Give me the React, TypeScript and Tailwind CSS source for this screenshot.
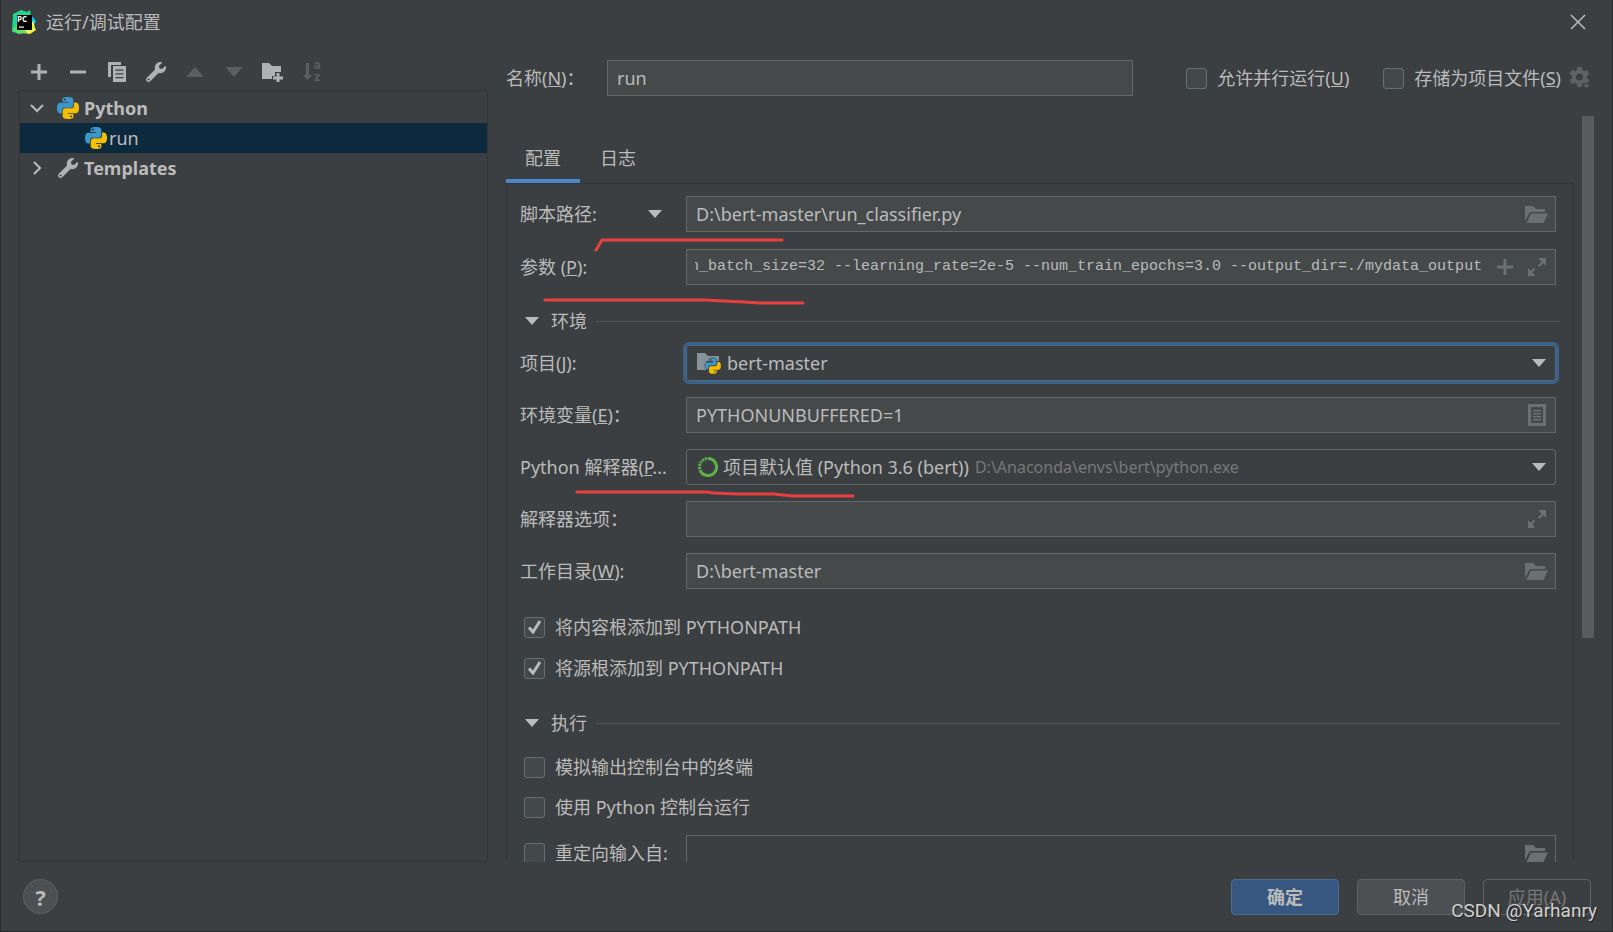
import { useEffect, useRef, type ReactNode } from 'react';
import { FaWrench } from 'react-icons/fa';

const PARAMETERS =
  'n_batch_size=32 --learning_rate=2e-5 --num_train_epochs=3.0 --output_dir=./mydata_output';

const PYTHON_HALF =
  'M14.25.18l.9.2.73.26.59.3.45.32.34.34.25.34.16.33.1.3.04.26.02.2-.01.13V8.5l-.05.63-.13.55-.21.46-.26.38-.3.31-.33.25-.35.19-.35.14-.33.1-.3.07-.26.04-.21.02H8.77l-.69.05-.59.14-.5.22-.41.27-.33.32-.27.35-.2.36-.15.37-.1.35-.07.32-.04.27-.02.21v3.06H3.17l-.21-.03-.28-.07-.32-.12-.35-.18-.36-.26-.36-.36-.35-.46-.32-.59-.28-.73-.21-.88-.14-1.05-.05-1.23.06-1.22.16-1.04.24-.87.32-.71.36-.57.4-.44.42-.33.42-.24.4-.16.36-.1.32-.05.24-.01h.16l.06.01h8.16v-.83H6.18l-.01-2.75-.02-.37.05-.34.11-.31.17-.28.25-.26.31-.23.38-.2.44-.18.51-.15.58-.12.64-.1.71-.06.77-.04.84-.02 1.27.05zm-6.3 1.98l-.23.33-.08.41.08.41.23.34.33.22.41.09.41-.09.33-.22.23-.34.08-.41-.08-.41-.23-.33-.33-.22-.41-.09-.41.09z';

const PythonIcon = ({ className = 'size-[22px]' }: { className?: string }) => (
  <svg viewBox="0 0 24 24" className={`shrink-0 ${className}`}>
    <path d={PYTHON_HALF} fill="#3e97c9" />
    <path d={PYTHON_HALF} fill="#f2bf05" transform="rotate(180 12 12)" />
  </svg>
);

const PyCharmIcon = () => (
  <svg viewBox="0 0 24 24" className="size-6 shrink-0">
    <path d="M1 4L9 0l6 2 3-2 1 6-6 9-8 8-5-1z" fill="#21d789" />
    <path d="M19 6l2 1 3 4-2 4-5-2z" fill="#07c3f2" />
    <path d="M12 19l8-6 1-3 2 8 1 2-6 4-7-1z" fill="#f1f546" />
    <path d="M0 19l5-2 8 3 2 3-9 1z" fill="#5ee06a" />
    <rect x="5" y="5" width="15" height="15" fill="#000" />
    <text x="5" y="12" fontSize="8" fontWeight="700" fontFamily="Open Sans, sans-serif" fill="#fff">
      PC
    </text>
    <path d="M7 16.500h5v1.200H7z" fill="#fff" />
  </svg>
);

const PlusIcon = ({ className = 'size-4' }: { className?: string }) => (
  <svg viewBox="0 0 16 16" className={className} fill="currentColor">
    <path d="M6.500 0h3v6.500H16v3H9.500V16h-3V9.500H0v-3h6.500z" />
  </svg>
);

const MinusIcon = () => (
  <svg viewBox="0 0 16 16" className="size-4" fill="currentColor">
    <path d="M0 6.500h16v3H0z" />
  </svg>
);

const CopyIcon = () => (
  <svg viewBox="0 0 20 20" className="size-5" fill="currentColor">
    <path d="M1 0h13v3H4v12H1z" />
    <path
      fillRule="evenodd"
      d="M6 4h13v16H6zM8.500 7.500v1.300h8V7.500zM8.500 11.200v1.300h8v-1.300zM8.500 15v1.300h8V15z"
    />
  </svg>
);

const NewFolderIcon = () => (
  <svg viewBox="0 0 22 20" className="h-5 w-[22px]" fill="currentColor">
    <path d="M0 1h7l3 3h9v6h-6v4h-3v3H0z" />
    <path d="M14.500 11h3v3.500H21v3h-3.500V21h-3v-3.500H11v-3h3.500z" />
  </svg>
);

const SortIcon = () => (
  <svg viewBox="0 0 20 20" className="size-5 overflow-visible" fill="currentColor">
    <path d="M4 1h3v12h3l-4.500 5L1 13h3z" />
    <text x="12" y="7" fontSize="12" fontWeight="700" fontFamily="Roboto, sans-serif">
      a
    </text>
    <text x="12" y="19" fontSize="12" fontWeight="700" fontFamily="Roboto, sans-serif">
      z
    </text>
  </svg>
);

const TriangleIcon = ({ className = 'h-2 w-[14px]' }: { className?: string }) => (
  <svg viewBox="0 0 14 8" className={`shrink-0 ${className}`} fill="currentColor">
    <path d="M0 0h14L7 8z" />
  </svg>
);

const ChevronIcon = ({ open }: { open?: boolean }) => (
  <svg viewBox="0 0 14 14" className="size-[14px] shrink-0" fill="none" stroke="currentColor" strokeWidth="2">
    <path d={open ? 'M1 4l6 6 6-6' : 'M4 1l6 6-6 6'} />
  </svg>
);

const OpenFolderIcon = () => (
  <svg viewBox="0 0 24 17" className="h-[17px] w-6" fill="currentColor">
    <path d="M0 0h8l3 3h9v3H5L0 15z" />
    <path d="M6 7.500h17L18.500 17H1.500z" />
  </svg>
);

const ExpandIcon = () => (
  <svg viewBox="0 0 20 20" className="size-5" fill="currentColor">
    <path d="M11 1h8v8l-2.700-2.700-3.800 3.800-1.600-1.600 3.800-3.800zM1 11l2.700 2.700 3.200-3.200 1.600 1.600-3.200 3.200L8 19H1z" />
  </svg>
);

const ListIcon = () => (
  <svg viewBox="0 0 18 22" className="h-[22px] w-[18px]" fill="currentColor">
    <path
      fillRule="evenodd"
      d="M0 0h18v22H0zM3 3v16h12V3zM5 6h8v1.500H5zM5 9h8v1.500H5zM5 12h8v1.500H5zM5 15h8v1.500H5z"
    />
  </svg>
);

const GearIcon = () => (
  <svg viewBox="0 0 24 24" className="size-6" fill="currentColor">
    {[0, 60, 120].map((angle) => (
      <rect key={angle} x="9" y="1" width="5" height="20" transform={`rotate(${angle} 11.500 11)`} />
    ))}
    <circle cx="11.500" cy="11" r="5.500" fill="none" stroke="currentColor" strokeWidth="4" />
    <circle cx="11.500" cy="11" r="3.500" fill="#3c3f41" />
    <path d="M14 18h9l-4.500 5z" stroke="#3c3f41" />
  </svg>
);

const ProjectIcon = () => (
  <svg viewBox="0 0 24 22" className="h-[22px] w-6 shrink-0">
    <path d="M0 1h8l3 3h11v5H9v9H0z" fill="#87939a" />
    <g transform="translate(8 6) scale(.66)">
      <path d={PYTHON_HALF} fill="#3e97c9" stroke="#3c3f41" strokeWidth="1" />
      <path d={PYTHON_HALF} fill="#f2bf05" transform="rotate(180 12 12)" />
    </g>
  </svg>
);

const CondaIcon = () => (
  <svg viewBox="0 0 22 22" className="size-[22px] shrink-0" fill="none" stroke="#5fb346">
    <path d="M11 2.500A8.500 8.500 0 1 1 4 15.800" strokeWidth="3" />
    <path d="M4 15.800A8.500 8.500 0 0 1 11 2.500" strokeWidth="3" strokeDasharray="2 1" />
  </svg>
);

interface CheckOptionProps {
  label: ReactNode;
  checked?: boolean;
  className?: string;
}

const CheckOption = ({ label, checked, className = '' }: CheckOptionProps) => (
  <label className={`flex items-center gap-[10px] whitespace-nowrap ${className}`}>
    <span className="grid shrink-0">
      <input
        type="checkbox"
        defaultChecked={checked}
        className="peer col-start-1 row-start-1 size-[21px] appearance-none rounded-[3px] border border-[#6b6e70] bg-[#43494a]"
      />
      <svg
        viewBox="0 0 21 21"
        className="pointer-events-none invisible col-start-1 row-start-1 size-[21px] peer-checked:visible"
        fill="none"
        stroke="#bbbbbb"
        strokeWidth="3"
      >
        <path d="M5 10.500l4 4.500 7-11" />
      </svg>
    </span>
    <span>{label}</span>
  </label>
);

interface FieldRowProps {
  id: string;
  label: ReactNode;
  children: ReactNode;
}

const FieldRow = ({ id, label, children }: FieldRowProps) => (
  <div className="flex h-9 items-center">
    <label htmlFor={id} className="w-[166px] shrink-0 whitespace-nowrap">
      {label}
    </label>
    {children}
  </div>
);

interface TextFieldProps {
  id: string;
  value?: string;
  icon: ReactNode;
  iconLabel: string;
}

const TextField = ({ id, value = '', icon, iconLabel }: TextFieldProps) => (
  <div className="flex h-9 min-w-0 flex-1 items-center border border-[#646869] bg-[#45494a] pr-[6px] pl-[9px]">
    <input id={id} type="text" defaultValue={value} className="min-w-0 flex-1 bg-transparent outline-none" />
    <button type="button" aria-label={iconLabel} className="flex w-6 justify-center text-[#6b7173]">
      {icon}
    </button>
  </div>
);

const SectionHeader = ({ title }: { title: string }) => (
  <div className="flex h-6 items-center">
    <button type="button" className="flex items-center gap-3 pl-[5px]">
      <TriangleIcon />
      {title}
    </button>
    <span className="ml-[9px] h-px flex-1 bg-[#515556]" />
  </div>
);

const ParametersField = () => {
  const inputRef = useRef<HTMLInputElement>(null);

  // keep the end of a long command line in view
  useEffect(() => {
    if (inputRef.current) {
      inputRef.current.scrollLeft = inputRef.current.scrollWidth;
    }
  }, []);

  return (
    <div className="flex h-9 min-w-0 flex-1 items-center border border-[#646869] bg-[#45494a] pr-[6px] pl-2">
      <input
        id="parameters"
        ref={inputRef}
        type="text"
        defaultValue={PARAMETERS}
        className="min-w-0 flex-1 bg-transparent font-['Liberation_Mono',monospace] text-[15px] outline-none"
      />
      <button type="button" aria-label="插入宏" className="ml-[15px] text-[#6b7173]">
        <PlusIcon />
      </button>
      <button type="button" aria-label="展开" className="ml-3 flex w-6 justify-center text-[#6b7173]">
        <ExpandIcon />
      </button>
    </div>
  );
};

const Toolbar = () => (
  <div className="flex h-[46px] items-center pt-[10px] text-[#afb1b3]">
    <button type="button" aria-label="添加" className="flex w-[39px] justify-center">
      <PlusIcon />
    </button>
    <button type="button" aria-label="移除" className="flex w-[39px] justify-center">
      <MinusIcon />
    </button>
    <button type="button" aria-label="复制" className="flex w-[39px] justify-center">
      <CopyIcon />
    </button>
    <button type="button" aria-label="编辑模板" className="flex w-[39px] justify-center">
      <FaWrench className="size-5" />
    </button>
    <button type="button" aria-label="上移" disabled className="flex w-[39px] justify-center text-[#5c5f61]">
      <TriangleIcon className="h-[10px] w-[18px] rotate-180" />
    </button>
    <button type="button" aria-label="下移" disabled className="flex w-[39px] justify-center text-[#5c5f61]">
      <TriangleIcon className="h-[10px] w-[18px]" />
    </button>
    <button type="button" aria-label="新建文件夹" className="flex w-[39px] justify-center">
      <NewFolderIcon />
    </button>
    <button type="button" aria-label="排序" disabled className="flex w-[39px] justify-center text-[#5c5f61]">
      <SortIcon />
    </button>
  </div>
);

const ConfigTree = () => (
  <ul className="flex-1 border border-[#323435] pt-[2px]">
    <li>
      <div className="flex h-[30px] items-center pl-[10px] font-bold">
        <ChevronIcon open />
        <PythonIcon className="mr-[5px] ml-[13px] size-[22px]" />
        Python
      </div>
      <ul>
        <li className="flex h-[30px] items-center gap-[2px] bg-[#0d293e] pl-[65px]">
          <PythonIcon />
          run
        </li>
      </ul>
    </li>
    <li className="flex h-[30px] items-center pl-[10px] font-bold">
      <ChevronIcon />
      <FaWrench className="mr-[6px] ml-[14px] size-5 text-[#afb1b3]" />
      Templates
    </li>
  </ul>
);

// hand-drawn underlines lying over the form
const MarkerStrokes = () => (
  <svg
    className="pointer-events-none absolute top-0 left-0 h-[330px] w-[360px]"
    viewBox="0 0 360 330"
    fill="none"
    stroke="#e93f3f"
    strokeWidth="3"
    strokeLinecap="round"
    strokeLinejoin="round"
  >
    <path d="M89 66l6-10h180" />
    <path d="M38 116h160l18 1 22 1 15 1h43" />
    <path d="M70 308h129l8 1 24 1 36 0 18 2h61" />
  </svg>
);

const ConfigurationPanel = () => (
  <div className="relative min-h-0 flex-1 overflow-hidden border-x border-[#323435] px-[13px]">
    <div className="flex flex-col gap-[17px] pt-3 pr-1">
      <div className="flex h-9 items-center">
        <label htmlFor="script-path" className="w-32 shrink-0">
          脚本路径:
        </label>
        <button type="button" aria-label="选择目标类型" className="flex w-[38px] shrink-0">
          <TriangleIcon />
        </button>
        <TextField
          id="script-path"
          value="D:\bert-master\run_classifier.py"
          icon={<OpenFolderIcon />}
          iconLabel="浏览"
        />
      </div>
      <FieldRow id="parameters" label={<>参数 (<u>P</u>):</>}>
        <ParametersField />
      </FieldRow>
    </div>

    <div className="pt-6">
      <SectionHeader title="环境" />
    </div>

    <div className="flex flex-col gap-4 pt-3 pr-1">
      <FieldRow id="project" label={<>项目(<u>J</u>):</>}>
        <div className="flex h-9 min-w-0 flex-1 items-center rounded-[3px] border border-[#466d94] pr-[9px] pl-[10px] ring-3 ring-[#3d6185]">
          <ProjectIcon />
          <select id="project" className="ml-[6px] min-w-0 flex-1 appearance-none bg-transparent outline-none">
            <option>bert-master</option>
          </select>
          <TriangleIcon />
        </div>
      </FieldRow>
      <FieldRow id="environment" label={<>环境变量(<u>E</u>)：</>}>
        <TextField id="environment" value="PYTHONUNBUFFERED=1" icon={<ListIcon />} iconLabel="编辑环境变量" />
      </FieldRow>
      <FieldRow id="interpreter" label={<>Python 解释器(<u>P</u>...</>}>
        <div className="flex h-9 min-w-0 flex-1 items-center rounded-[3px] border border-[#646869] pr-[9px] pl-[10px]">
          <CondaIcon />
          <select
            id="interpreter"
            className="ml-1 field-sizing-content shrink-0 appearance-none bg-transparent outline-none"
          >
            <option>项目默认值 (Python 3.6 (bert))</option>
          </select>
          <span className="ml-[6px] flex-1 truncate text-[16px] text-[#787878]">
            D:\Anaconda\envs\bert\python.exe
          </span>
          <TriangleIcon />
        </div>
      </FieldRow>
      <FieldRow id="interpreter-options" label="解释器选项：">
        <TextField id="interpreter-options" icon={<ExpandIcon />} iconLabel="展开" />
      </FieldRow>
      <FieldRow id="working-directory" label={<>工作目录(<u>W</u>):</>}>
        <TextField
          id="working-directory"
          value="D:\bert-master"
          icon={<OpenFolderIcon />}
          iconLabel="浏览"
        />
      </FieldRow>
    </div>

    <div className="flex flex-col gap-[17px] pt-[26px] pl-1">
      <CheckOption checked label="将内容根添加到 PYTHONPATH" />
      <CheckOption checked label="将源根添加到 PYTHONPATH" />
    </div>

    <div className="pt-[31px]">
      <SectionHeader title="执行" />
    </div>

    <div className="flex flex-col gap-4 pt-5 pr-1 pl-1">
      <CheckOption label="模拟输出控制台中的终端" />
      <CheckOption label="使用 Python 控制台运行" />
      <div className="flex h-9 items-center">
        <CheckOption label="重定向输入自:" className="w-[162px] shrink-0" />
        <div className="flex h-9 min-w-0 flex-1 items-center border border-[#646869] pr-[6px] pl-[9px]">
          <input
            type="text"
            aria-label="重定向输入文件"
            disabled
            className="min-w-0 flex-1 bg-transparent outline-none"
          />
          <button type="button" aria-label="浏览" disabled className="text-[#6b7173]">
            <OpenFolderIcon />
          </button>
        </div>
      </div>
    </div>

    <MarkerStrokes />
  </div>
);

export default function App() {
  return (
    <div className="relative flex h-screen flex-col overflow-hidden border-r border-b border-l border-[#2b2b2b] bg-[#3c3f41] font-['Noto_Sans','Noto_Sans_CJK_SC',sans-serif] text-[18px] leading-6 text-[#bbbbbb]">
      <header className="flex h-11 shrink-0 items-center gap-[10px] pr-[26px] pl-[11px]">
        <PyCharmIcon />
        <h1 className="flex-1">运行/调试配置</h1>
        <button type="button" aria-label="关闭">
          <svg viewBox="0 0 16 16" className="size-4" fill="none" stroke="currentColor" strokeWidth="1.500">
            <path d="M1 1l14 14M15 1L1 15" />
          </svg>
        </button>
      </header>

      <main className="flex min-h-0 flex-1 pl-[18px]">
        <section className="flex w-[469px] shrink-0 flex-col">
          <Toolbar />
          <ConfigTree />
        </section>

        <section className="ml-[18px] flex min-w-0 flex-1 flex-col pt-4">
          <div className="flex h-9 shrink-0 items-center pr-5">
            <label htmlFor="name" className="w-[101px] shrink-0">
              名称(<u>N</u>)：
            </label>
            <input
              id="name"
              type="text"
              defaultValue="run"
              className="h-9 min-w-0 flex-1 border border-[#646869] bg-[#45494a] px-[9px] outline-none"
            />
            <CheckOption label={<>允许并行运行(<u>U</u>)</>} className="ml-[53px]" />
            <CheckOption label={<>存储为项目文件(<u>S</u>)</>} className="ml-[34px]" />
            <button type="button" aria-label="存储选项" className="ml-[7px] text-[#5f6264]">
              <GearIcon />
            </button>
          </div>

          <div className="mt-5 flex min-h-0 flex-1">
            <div className="flex min-w-0 flex-1 flex-col">
              <div role="tablist" className="flex h-[68px] shrink-0 items-end border-b border-[#323435]">
                <button
                  type="button"
                  role="tab"
                  aria-selected="true"
                  className="h-[46px] border-b-4 border-[#4a88c7] px-[19px]"
                >
                  配置
                </button>
                <button
                  type="button"
                  role="tab"
                  aria-selected="false"
                  className="h-[46px] border-b-4 border-transparent px-5"
                >
                  日志
                </button>
              </div>
              <ConfigurationPanel />
            </div>
            <div className="mr-[18px] ml-2 w-3 shrink-0">
              <div className="h-[70%] bg-[#595b5d]" />
            </div>
          </div>
        </section>
      </main>

      <footer className="flex h-[69px] shrink-0 items-center gap-[18px] pr-[21px] pl-[22px]">
        <button
          type="button"
          aria-label="帮助"
          className="mr-auto size-[35px] rounded-full border border-[#5e6264] bg-[#4c5052] text-[22px] font-bold"
        >
          ?
        </button>
        <button
          type="button"
          className="h-9 w-[108px] rounded-[4px] border border-[#4c708c] bg-[#365880] font-bold"
        >
          确定
        </button>
        <button type="button" className="h-9 w-[108px] rounded-[4px] border border-[#5e6264] bg-[#4c5052]">
          取消
        </button>
        <button
          type="button"
          disabled
          className="h-9 w-[108px] rounded-[4px] border border-[#5e6264] text-[#777777]"
        >
          应用(A)
        </button>
      </footer>

      <p className="pointer-events-none absolute right-[15px] bottom-2 font-['Roboto',sans-serif] text-[19px] text-[#d0d0d0] [text-shadow:1px_1px_1px_#222]">
        CSDN @Yarhanry
      </p>
    </div>
  );
}
